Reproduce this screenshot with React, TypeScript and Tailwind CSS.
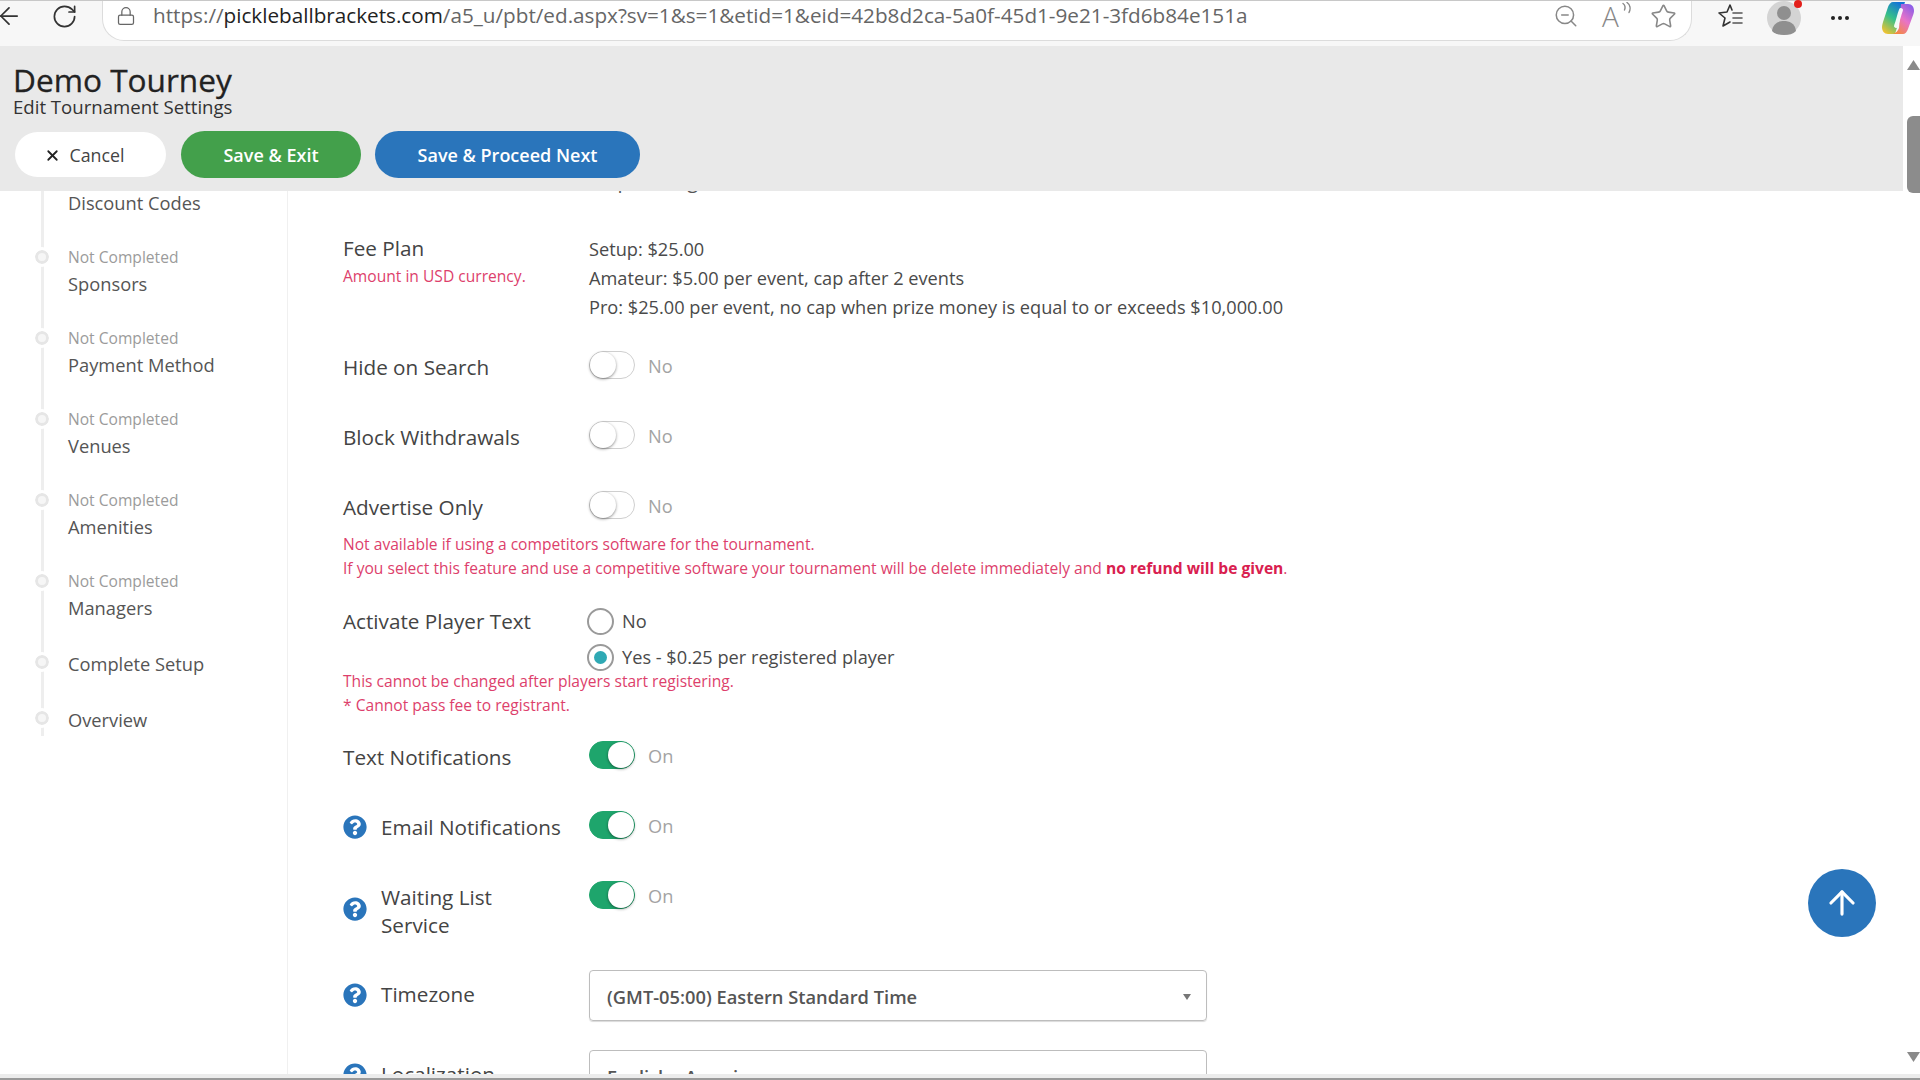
import React from "react";
import { ArrowLeft, ArrowUp, Lock, RotateCw, Star, X, ZoomOut } from "lucide-react";
import { FaQuestionCircle } from "react-icons/fa";

const RED = "text-[#dd3f6c]";

function Toggle({ on }: { on: boolean }) {
  return (
    <div className="flex h-[32px] items-center gap-[13px]">
      <span
        className={`relative block h-[28px] w-[46px] rounded-full border ${
          on ? "border-[#1ea56c] bg-[#1ea56c]" : "border-[#cfcfcf] bg-white"
        }`}
      >
        <span
          className={`absolute top-0 block h-[26px] w-[26px] rounded-full bg-white shadow-[0_1px_3px_rgba(0,0,0,0.45)] ${
            on ? "right-0" : "left-0"
          }`}
        />
      </span>
      <span className="pt-[1px] text-[18.2px] leading-[24px] text-[#a3a3a3]">{on ? "On" : "No"}</span>
    </div>
  );
}

function Help() {
  return <FaQuestionCircle className="shrink-0 text-[24px] text-[#2a75bb]" />;
}

function ToggleRow({ label, on, help, className }: { label: string; on: boolean; help?: boolean; className: string }) {
  return (
    <div className={`flex h-[32px] ${className}`}>
      <div className="flex w-[246px] items-center gap-[14px] pt-[4px] text-[20.7px] leading-[28px] text-[#444]">
        {help && <Help />}
        <span>{label}</span>
      </div>
      <Toggle on={on} />
    </div>
  );
}

function Radio({ checked, label, className = "" }: { checked?: boolean; label: string; className?: string }) {
  return (
    <div className={`flex h-[27px] items-center gap-[8px] ${className}`}>
      <span className="flex h-[27px] w-[27px] items-center justify-center rounded-full border-2 border-[#9a9a9a] bg-white">
        {checked && <span className="block h-[13px] w-[13px] rounded-full bg-[#2fa9b4]" />}
      </span>
      <span className="text-[18.2px] text-[#4a4a4a]">{label}</span>
    </div>
  );
}

function Step({ name, status }: { name: string; status?: boolean }) {
  return (
    <div className={`relative pl-[68px] ${status ? "h-[81px]" : "h-[56px]"}`}>
      <span className="absolute left-[35px] top-[3px] block h-[14px] w-[14px] rounded-full border-[3px] border-[#e6e6e6] bg-[#f6f6f6] outline-3 outline-white" />
      {status && <div className="text-[15.6px] leading-[20px] text-[#9b9b9b]">Not Completed</div>}
      <div className={`text-[18.3px] leading-[24px] text-[#555] ${status ? "mt-[5px]" : ""}`}>{name}</div>
    </div>
  );
}

function FavoritesIcon() {
  return (
    <svg width="28" height="28" viewBox="0 0 28 28" fill="none" stroke="#333" strokeWidth="1.6" strokeLinejoin="round" strokeLinecap="round">
      <path d="M15 8 L13 3 L10 10 L2 11 L8 16 L6 24 L13 20" />
      <path d="M16 11h9M16 16h9M16 21h9" stroke="#555" />
    </svg>
  );
}

function ReadAloudIcon() {
  return (
    <div className="relative h-[28px] w-[28px] text-[#888]">
      <span className="block text-[28px] leading-[28px] font-light">A</span>
      <svg className="absolute right-[-3px] top-0" width="12" height="14" viewBox="0 0 12 14" fill="none" stroke="#888" strokeWidth="1.4" strokeLinecap="round">
        <path d="M2 1.5c2 1.5 2.5 4 1.5 6.5" />
        <path d="M6 0.5c3 2 4 6 2 10" />
      </svg>
    </div>
  );
}

function Avatar() {
  return (
    <div className="relative h-[34px] w-[34px]">
      <svg width="34" height="34" viewBox="0 0 34 34">
        <circle cx="17" cy="17" r="17" fill="#d4d4d4" />
        <circle cx="17" cy="12" r="7" fill="#8f8f8f" />
        <path d="M5 30c1-8 7-10 12-10s11 2 12 10c-3 3-7 4-12 4s-9-1-12-4z" fill="#8f8f8f" />
      </svg>
      <span className="absolute right-[-1px] top-[-1px] block h-[8px] w-[8px] rounded-full bg-[#e3201b]" />
    </div>
  );
}

function Copilot() {
  return (
    <svg width="34" height="34" viewBox="0 0 34 34">
      <defs>
        <linearGradient id="cpA" x1="0.7" y1="0" x2="0.2" y2="1">
          <stop offset="0" stopColor="#1273d8" />
          <stop offset="0.5" stopColor="#35c08a" />
          <stop offset="1" stopColor="#f2c230" />
        </linearGradient>
        <linearGradient id="cpB" x1="0.8" y1="0" x2="0.2" y2="1">
          <stop offset="0" stopColor="#8a5ee8" />
          <stop offset="0.5" stopColor="#e873c8" />
          <stop offset="1" stopColor="#f58a3c" />
        </linearGradient>
      </defs>
      <path d="M12 1H24L14 33H7C3 33 1 30 1 26C1 24 2 21 3 18L7 6C8 3 10 1 12 1z" fill="url(#cpA)" />
      <path d="M20 3H27C31 3 33 6 33 10C33 12 32 14 31 17L27 28C26 31 24 33 22 33H12C15 32 17 30 18 27z" fill="url(#cpB)" />
      <path d="M20 9C18 14 17 20 15 25" stroke="#fff" strokeWidth="4" strokeLinecap="round" fill="none" opacity="0.92" />
    </svg>
  );
}

export default function App() {
  return (
    <div className="relative flex h-screen w-full flex-col overflow-hidden bg-white font-['Open_Sans',sans-serif]">
      {/* browser toolbar */}
      <div className="flex h-[46px] shrink-0 items-start border-t border-[#c8c8c8] bg-[#f7f7f7] pr-[5px]">
        <ArrowLeft size={28} strokeWidth={1.5} className="ml-[-5px] mt-[1px] text-[#333]" />
        <RotateCw size={27} strokeWidth={1.5} className="ml-[28px] mt-[2px] text-[#333]" />
        <div className="ml-[24px] flex h-[40px] flex-1 items-center rounded-b-[22px] border-b border-l border-r border-[#dcdcdc] bg-white pb-[9px] pl-[13px]">
          <Lock size={20} strokeWidth={1.5} className="text-[#666]" />
          <div className="ml-[17px] min-w-0 flex-1 whitespace-nowrap text-[20.7px] text-[#222]">
            <span className="text-[#666]">https://</span>pickleballbrackets.com<span className="text-[#666]">/a5_u/pbt/ed.aspx?sv=1&amp;s=1&amp;etid=1&amp;eid=42b8d2ca-5a0f-45d1-9e21-3fd6b84e151a</span>
          </div>
          <ZoomOut size={26} strokeWidth={1.4} className="text-[#888]" />
          <div className="ml-[23px]"><ReadAloudIcon /></div>
          <Star size={27} strokeWidth={1.4} className="ml-[20px] mr-[14px] text-[#888]" />
        </div>
        <div className="ml-[25px] mt-[1px]"><FavoritesIcon /></div>
        <div className="ml-[22px]"><Avatar /></div>
        <div className="ml-[30px] mt-[15px] flex gap-[3px]">
          <span className="block h-[4px] w-[4px] rounded-full bg-[#222]" />
          <span className="block h-[4px] w-[4px] rounded-full bg-[#222]" />
          <span className="block h-[4px] w-[4px] rounded-full bg-[#222]" />
        </div>
        <div className="ml-[32px]"><Copilot /></div>
      </div>

      <div className="flex min-h-0 flex-1">
        <div className="flex min-w-0 flex-1 flex-col">
          {/* page header */}
          <header className="h-[145px] shrink-0 bg-[#e9e9e9] pl-[13px] pt-[17px]">
            <h1 className="text-[31.6px] leading-[33px] text-[#222] [-webkit-text-stroke:0.3px_#222]">Demo Tourney</h1>
            <div className="text-[18.6px] font-medium leading-[22px] text-[#333]">Edit Tournament Settings</div>
            <div className="mt-[13px] flex items-center gap-[14px]">
              <button className="ml-[2px] flex h-[45px] w-[151px] items-center justify-center gap-[9px] rounded-full bg-white pr-[13px] pt-[2px] text-[17.8px] font-medium text-[#444]">
                <X size={17} strokeWidth={2.5} className="text-[#222]" />
                Cancel
              </button>
              <button className="ml-[1px] h-[47px] w-[180px] rounded-full bg-[#43a04b] pt-[2px] text-[18px] font-semibold text-white">Save &amp; Exit</button>
              <button className="h-[47px] w-[265px] rounded-full bg-[#2a75bb] pt-[2px] text-[18px] font-semibold text-white">Save &amp; Proceed Next</button>
            </div>
          </header>

          {/* page body */}
          <main className="flex min-h-0 flex-1 overflow-hidden">
            <aside className="relative w-[288px] shrink-0 border-r border-[#f0f0f0]">
              <span className="absolute left-[41px] top-0 block h-[545px] w-[3px] bg-[#eeeeee]" />
              <div className="relative h-[56px] pl-[68px] text-[18.3px] leading-[24px] text-[#555]">Discount Codes</div>
              <Step status name="Sponsors" />
              <Step status name="Payment Method" />
              <Step status name="Venues" />
              <Step status name="Amenities" />
              <Step status name="Managers" />
              <Step name="Complete Setup" />
              <Step name="Overview" />
            </aside>

            <section className="flex-1 pl-[55px]">
              <div className="ml-[260px] mt-[-24px] h-[24px] text-[20px] leading-[28px] text-[#555]">Upcoming</div>

              <div className="mt-[44px] flex">
                <div className="w-[246px]">
                  <div className="text-[20.7px] leading-[26px] text-[#444]">Fee Plan</div>
                  <div className={`mt-[5px] text-[15.6px] leading-[20px] ${RED}`}>Amount in USD currency.</div>
                </div>
                <div className="text-[18.2px] leading-[29px] text-[#4a4a4a]">
                  <div>Setup: $25.00</div>
                  <div>Amateur: $5.00 per event, cap after 2 events</div>
                  <div>Pro: $25.00 per event, no cap when prize money is equal to or exceeds $10,000.00</div>
                </div>
              </div>

              <ToggleRow className="mt-[27px]" label="Hide on Search" on={false} />
              <ToggleRow className="mt-[38px]" label="Block Withdrawals" on={false} />
              <ToggleRow className="mt-[38px]" label="Advertise Only" on={false} />

              <div className={`mt-[11px] text-[15.6px] leading-[24px] ${RED}`}>
                <div>Not available if using a competitors software for the tournament.</div>
                <div>
                  If you select this feature and use a competitive software your tournament will be delete immediately and{" "}
                  <strong className="font-bold text-[#d9204f]">no refund will be given</strong>.
                </div>
              </div>

              <div className="mt-[28px] flex">
                <div className="w-[246px] text-[20.7px] leading-[26px] text-[#444]">Activate Player Text</div>
                <div className="ml-[-2px]">
                  <Radio label="No" />
                  <Radio className="mt-[9px]" checked label="Yes - $0.25 per registered player" />
                </div>
              </div>

              <div className={`mt-[-2px] text-[15.6px] leading-[24px] ${RED}`}>
                <div>This cannot be changed after players start registering.</div>
                <div>* Cannot pass fee to registrant.</div>
              </div>

              <ToggleRow className="mt-[22px]" label="Text Notifications" on />
              <ToggleRow className="mt-[38px]" help label="Email Notifications" on />

              <div className="mt-[38px] flex">
                <div className="flex h-[60px] w-[246px] items-center gap-[14px] text-[20.7px] leading-[28px] text-[#444]">
                  <Help />
                  <span className="block pt-[4px]">Waiting List<br />Service</span>
                </div>
                <Toggle on />
              </div>

              <div className="mt-[31px] flex">
                <div className="flex h-[50px] w-[246px] items-center gap-[14px] text-[20.7px] text-[#444]">
                  <Help />
                  <span>Timezone</span>
                </div>
                <div className="flex h-[51px] w-[618px] items-center justify-between rounded-[4px] border border-[#bdbdbd] pl-[17px] pr-[15px] pt-[2px] shadow-[0_1px_1px_rgba(0,0,0,0.15)]">
                  <span className="text-[18.3px] font-semibold text-[#555]">(GMT-05:00) Eastern Standard Time</span>
                  <span className="block border-x-[4px] border-t-[6px] border-x-transparent border-t-[#777]" />
                </div>
              </div>

              <div className="mt-[29px] flex">
                <div className="flex h-[50px] w-[246px] items-center gap-[14px] text-[20.7px] text-[#444]">
                  <Help />
                  <span>Localization</span>
                </div>
                <div className="flex h-[51px] w-[618px] items-center rounded-[4px] border border-[#bdbdbd] px-[17px] pt-[2px]">
                  <span className="text-[18.3px] font-semibold text-[#555]">English - America</span>
                </div>
              </div>
            </section>
          </main>
        </div>

        {/* page scrollbar */}
        <div className="flex w-[17px] shrink-0 flex-col items-end overflow-hidden bg-white">
          <svg className="mt-[14px]" width="13" height="10" viewBox="0 0 13 10"><path d="M6.5 0 L13 10 L0 10 Z" fill="#8a8a8a" /></svg>
          <span className="mt-[46px] block h-[77px] w-[13px] rounded-l-[6px] bg-[#8c8c8c]" />
          <div className="flex-1" />
          <svg className="mb-[12px]" width="13" height="10" viewBox="0 0 13 10"><path d="M0 0 L13 0 L6.5 10 Z" fill="#8a8a8a" /></svg>
        </div>
      </div>

      {/* window bottom edge */}
      <div className="h-[6px] shrink-0 border-b-2 border-[#9a9a9a] bg-[#ececec]" />

      <button className="absolute left-[1808px] top-[869px] flex h-[68px] w-[68px] items-center justify-center rounded-full bg-[#2a75bb] text-white">
        <ArrowUp size={38} strokeWidth={2} />
      </button>
    </div>
  );
}
